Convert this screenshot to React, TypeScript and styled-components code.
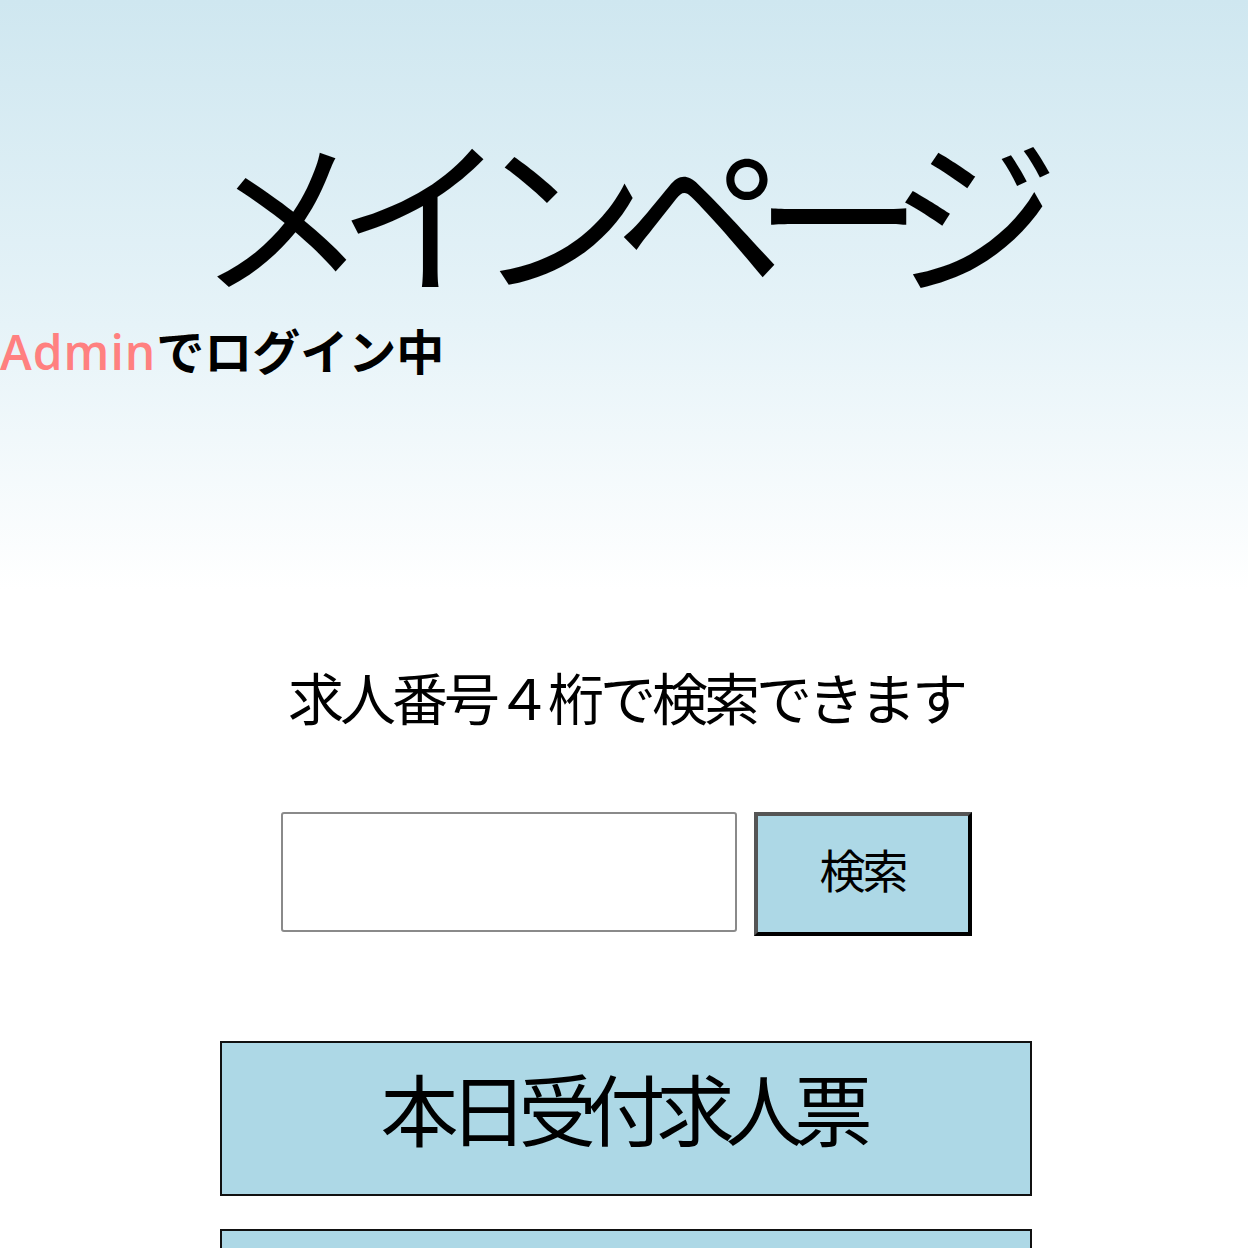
import React from "react";
import styled, { createGlobalStyle } from "styled-components";

const Global = createGlobalStyle`
  html, body { margin: 0; padding: 0; background: #fff; }
  body { font-family: "Noto Sans CJK JP", "Noto Sans", sans-serif; color: #000; }
`;

const Header = styled.header`
  background: linear-gradient(to bottom, #cfe7f0 0%, #e6f3f8 55%, #ffffff 100%);
  height: 590px;
  padding-top: 123px;
  box-sizing: border-box;
`;

const Title = styled.h1`
  margin: 0;
  text-align: center;
  font-size: 170px;
  font-weight: 400;
  line-height: 1;
  letter-spacing: -31px;
  text-indent: -22px;
`;

const LoginLine = styled.p`
  margin: 25px 0 0;
  font-size: 48px;
  font-weight: 700;
  line-height: 1.3;
`;

const UserName = styled.span`
  color: #ff8080;
  font-family: "Open Sans", "Noto Sans", sans-serif;
  font-weight: 600;
  letter-spacing: 1px;
`;

const Main = styled.main`
  display: flex;
  flex-direction: column;
  align-items: center;
  padding: 70px 0 0 4px;
`;

const Caption = styled.p`
  margin: 0;
  font-size: 56px;
  line-height: 1.3;
  font-weight: 400;
  letter-spacing: -4px;
`;

const SearchRow = styled.form`
  display: flex;
  align-items: flex-start;
  gap: 17px;
  margin-top: 79px;
`;

const SearchInput = styled.input`
  width: 456px;
  height: 120px;
  box-sizing: border-box;
  border: 2px solid #8a8a8a;
  border-radius: 3px;
  background: #fff;
  font-size: 44px;
  padding: 0 12px;
  outline: none;
`;

const SearchButton = styled.button`
  width: 218px;
  height: 124px;
  box-sizing: border-box;
  background: #add8e6;
  border: 4px solid;
  border-color: #555 #000 #000 #555;
  font-family: "Noto Sans CJK JP", sans-serif;
  font-size: 46px;
  letter-spacing: -3px;
  color: #000;
  padding: 0 0 12px;
  cursor: pointer;
`;

const Menu = styled.nav`
  display: flex;
  flex-direction: column;
  gap: 33px;
  margin-top: 105px;
  width: 812px;
`;

const MenuButton = styled.button`
  height: 155px;
  width: 100%;
  box-sizing: border-box;
  background: #add8e6;
  border: 2px solid #111;
  font-family: "Noto Sans CJK JP", sans-serif;
  font-size: 78px;
  font-weight: 400;
  letter-spacing: -9px;
  color: #000;
  padding: 0 8px 22px 0;
  cursor: pointer;
`;

export default function App() {
  return (
    <>
      <Global />
      <Header>
        <Title>メインページ</Title>
        <LoginLine>
          <UserName>Admin</UserName>でログイン中
        </LoginLine>
      </Header>
      <Main>
        <Caption>求人番号４桁で検索できます</Caption>
        <SearchRow onSubmit={(e) => e.preventDefault()}>
          <SearchInput type="text" />
          <SearchButton type="submit">検索</SearchButton>
        </SearchRow>
        <Menu>
          <MenuButton>本日受付求人票</MenuButton>
          <MenuButton>求人票一覧</MenuButton>
        </Menu>
      </Main>
    </>
  );
}
